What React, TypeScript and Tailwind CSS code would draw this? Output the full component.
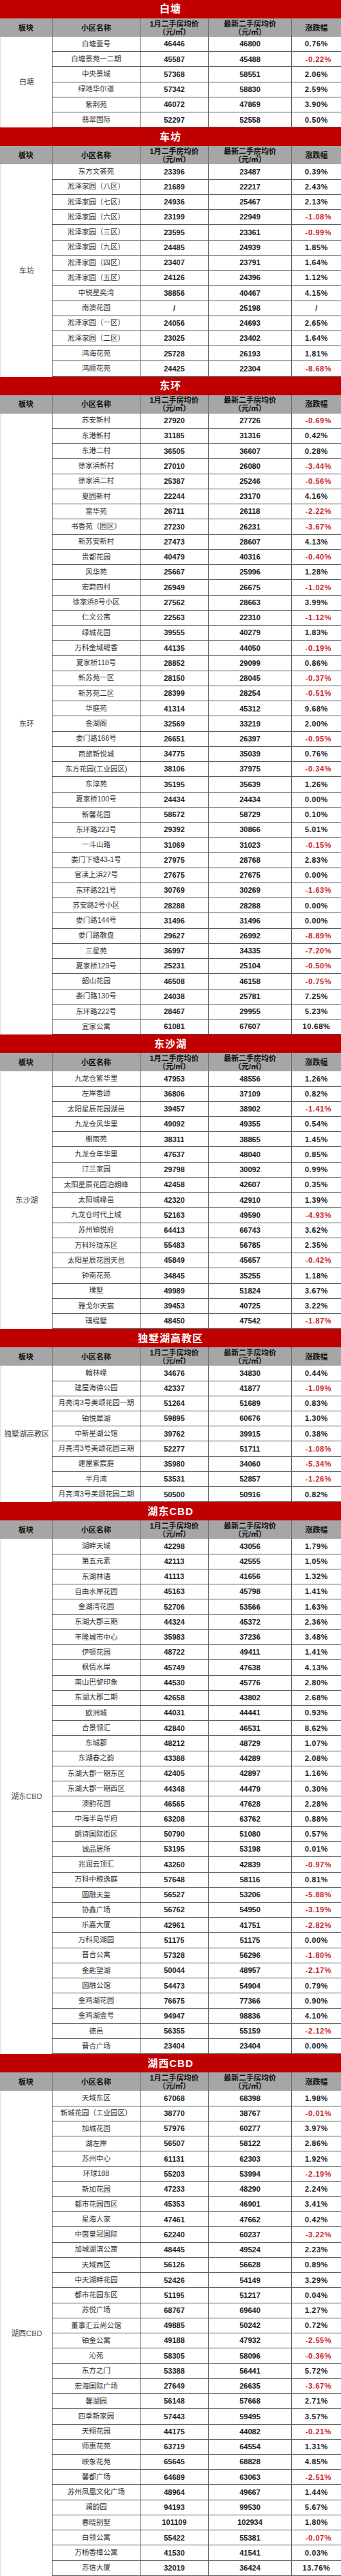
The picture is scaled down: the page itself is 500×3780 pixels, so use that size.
type Row = [string, string, string, string];

interface Section {
  title: string;
  area: string;
  rows: Row[];
}

const sections: Section[] = [
  {
    title: "白塘",
    area: "白塘",
    rows: [
      ["白塘壹号", "46446", "46800", "0.76%"],
      ["白塘景苑一二期", "45587", "45488", "-0.22%"],
      ["中央景城", "57368", "58551", "2.06%"],
      ["绿地华尔道", "57342", "58830", "2.59%"],
      ["紫荆苑", "46072", "47869", "3.90%"],
      ["翡翠国际", "52297", "52558", "0.50%"],
    ],
  },
  {
    title: "车坊",
    area: "车坊",
    rows: [
      ["东方文荟苑", "23396", "23487", "0.39%"],
      ["淞泽家园（八区）", "21689", "22217", "2.43%"],
      ["淞泽家园（七区）", "24936", "25467", "2.13%"],
      ["淞泽家园（六区）", "23199", "22949", "-1.08%"],
      ["淞泽家园（三区）", "23595", "23361", "-0.99%"],
      ["淞泽家园（九区）", "24485", "24939", "1.85%"],
      ["淞泽家园（四区）", "23407", "23791", "1.64%"],
      ["淞泽家园（五区）", "24126", "24396", "1.12%"],
      ["中锐星奕湾", "38856", "40467", "4.15%"],
      ["南澳花园", "/", "25198", "/"],
      ["淞泽家园（一区）", "24056", "24693", "2.65%"],
      ["淞泽家园（二区）", "23025", "23402", "1.64%"],
      ["鸿海花苑", "25728", "26193", "1.81%"],
      ["鸿顺花苑", "24425", "22304", "-8.68%"],
    ],
  },
  {
    title: "东环",
    area: "东环",
    rows: [
      ["苏安新村", "27920", "27726", "-0.69%"],
      ["东港新村", "31185", "31316", "0.42%"],
      ["东港二村", "36505", "36607", "0.28%"],
      ["徐家浜新村", "27010", "26080", "-3.44%"],
      ["徐家浜二村", "25387", "25246", "-0.56%"],
      ["夏园新村", "22244", "23170", "4.16%"],
      ["富华苑", "26711", "26118", "-2.22%"],
      ["书香苑（园区）", "27230", "26231", "-3.67%"],
      ["新苏安新村", "27473", "28607", "4.13%"],
      ["贵都花园", "40479", "40316", "-0.40%"],
      ["风华苑", "25667", "25996", "1.28%"],
      ["宏葑四村", "26949", "26675", "-1.02%"],
      ["徐家浜8号小区", "27562", "28663", "3.99%"],
      ["仁文公寓", "22563", "22310", "-1.12%"],
      ["绿城花园", "39555", "40279", "1.83%"],
      ["万科金域缇香", "44135", "44050", "-0.19%"],
      ["夏家桥118号", "28852", "29099", "0.86%"],
      ["新苏苑一区", "28150", "28045", "-0.37%"],
      ["新苏苑二区", "28399", "28254", "-0.51%"],
      ["华庭苑", "41314", "45312", "9.68%"],
      ["金湖阁", "32569", "33219", "2.00%"],
      ["娄门路166号", "26651", "26397", "-0.95%"],
      ["商旅新悦城", "34775", "35039", "0.76%"],
      ["东方花园(工业园区)", "38106", "37975", "-0.34%"],
      ["东淳苑", "35195", "35639", "1.26%"],
      ["夏家桥100号", "24434", "24434", "0.00%"],
      ["新馨花园", "58672", "58729", "0.10%"],
      ["东环路223号", "29392", "30866", "5.01%"],
      ["一斗山路", "31069", "31023", "-0.15%"],
      ["娄门下塘43-1号", "27975", "28768", "2.83%"],
      ["官渎上浜27号", "27675", "27675", "0.00%"],
      ["东环路221号", "30769", "30269", "-1.63%"],
      ["苏安路2号小区", "28288", "28288", "0.00%"],
      ["娄门路144号", "31496", "31496", "0.00%"],
      ["娄门路散盘", "29627", "26992", "-8.89%"],
      ["三星苑", "36997", "34335", "-7.20%"],
      ["夏家桥129号", "25231", "25104", "-0.50%"],
      ["韶山花园", "46508", "46158", "-0.75%"],
      ["娄门路130号", "24038", "25781", "7.25%"],
      ["东环路222号", "28467", "29955", "5.23%"],
      ["宜家公寓", "61081", "67607", "10.68%"],
    ],
  },
  {
    title: "东沙湖",
    area: "东沙湖",
    rows: [
      ["九龙仓繁华里", "47953", "48556", "1.26%"],
      ["左岸香颂", "36806", "37109", "0.82%"],
      ["太阳星辰花园湖邑", "39457", "38902", "-1.41%"],
      ["九龙仓风华里", "49092", "49355", "0.54%"],
      ["榭雨苑", "38311", "38865", "1.45%"],
      ["九龙仓年华里", "47637", "48040", "0.85%"],
      ["汀兰家园", "29798", "30092", "0.99%"],
      ["太阳星辰花园泊朗峰", "42458", "42607", "0.35%"],
      ["太阳城缘邑", "42320", "42910", "1.39%"],
      ["九龙仓时代上城", "52163", "49590", "-4.93%"],
      ["苏州铂悦府", "64413", "66743", "3.62%"],
      ["万科玲珑东区", "55483", "56785", "2.35%"],
      ["太阳星辰花园天邑", "45849", "45657", "-0.42%"],
      ["钟南花苑", "34845", "35255", "1.18%"],
      ["璞墅", "49989", "51824", "3.67%"],
      ["雅戈尔天宸", "39453", "40725", "3.22%"],
      ["璞缇墅", "48450", "47542", "-1.87%"],
    ],
  },
  {
    title: "独墅湖高教区",
    area: "独墅湖高教区",
    rows: [
      ["翰林缘", "34676", "34830", "0.44%"],
      ["建屋海德公园", "42337", "41877", "-1.09%"],
      ["月亮湾3号美颂花园一期", "51264", "51689", "0.83%"],
      ["铂悦犀湖", "59895", "60676", "1.30%"],
      ["中新星湖公馆", "39762", "39915", "0.38%"],
      ["月亮湾3号美颂花园三期", "52277", "51711", "-1.08%"],
      ["建屋紫宸庭", "35980", "34060", "-5.34%"],
      ["半月湾", "53531", "52857", "-1.26%"],
      ["月亮湾3号美颂花园二期", "50500", "50916", "0.82%"],
    ],
  },
  {
    title: "湖东CBD",
    area: "湖东CBD",
    rows: [
      ["湖畔天城", "42298", "43056", "1.79%"],
      ["第五元素", "42113", "42555", "1.05%"],
      ["东湖林语", "41113", "41656", "1.32%"],
      ["自由水岸花园", "45163", "45798", "1.41%"],
      ["金湖湾花园", "52706", "53566", "1.63%"],
      ["东湖大郡三期", "44324", "45372", "2.36%"],
      ["丰隆城市中心", "35983", "37236", "3.48%"],
      ["伊顿花园", "48722", "49411", "1.41%"],
      ["枫情水岸", "45749", "47638", "4.13%"],
      ["南山巴黎印象", "44530", "45776", "2.80%"],
      ["东湖大郡二期", "42658", "43802", "2.68%"],
      ["欧洲城", "44031", "44441", "0.93%"],
      ["合景领汇", "42840", "46531", "8.62%"],
      ["东城郡", "48212", "48729", "1.07%"],
      ["东湖春之韵", "43388", "44289", "2.08%"],
      ["东湖大郡一期东区", "42405", "42897", "1.16%"],
      ["东湖大郡一期西区", "44348", "44479", "0.30%"],
      ["澳韵花园", "46565", "47628", "2.28%"],
      ["中海半岛华府", "63208", "63762", "0.88%"],
      ["朗诗国际街区", "50790", "51080", "0.57%"],
      ["诚品居所", "53195", "53198", "0.01%"],
      ["兆润云顶汇", "43260", "42839", "-0.97%"],
      ["万科中粮逸庭", "57648", "58116", "0.81%"],
      ["圆融天玺", "56527", "53206", "-5.88%"],
      ["协鑫广场", "56762", "54950", "-3.19%"],
      ["乐嘉大厦", "42961", "41751", "-2.82%"],
      ["万科见湖园", "51175", "51175", "0.00%"],
      ["晋合公寓", "57328", "56296", "-1.80%"],
      ["金匙望湖", "50044", "48957", "-2.17%"],
      ["圆融公馆", "54473", "54904", "0.79%"],
      ["金鸡湖花园", "76675", "77366", "0.90%"],
      ["金鸡湖壹号", "94947", "98836", "4.10%"],
      ["德邑", "56355", "55159", "-2.12%"],
      ["晋合广场", "23404", "23404", "0.00%"],
    ],
  },
  {
    title: "湖西CBD",
    area: "湖西CBD",
    rows: [
      ["天域东区", "67068", "68398", "1.98%"],
      ["新城花园（工业园区）", "38770", "38767", "-0.01%"],
      ["加城花园", "57976", "60277", "3.97%"],
      ["湖左岸", "56507", "58122", "2.86%"],
      ["苏州中心", "61131", "62303", "1.92%"],
      ["环球188", "55203", "53994", "-2.19%"],
      ["新加花园", "47233", "48290", "2.24%"],
      ["都市花园西区", "45353", "46901", "3.41%"],
      ["星海人家", "47461", "47662", "0.42%"],
      ["中茵皇冠国际", "62240", "60237", "-3.22%"],
      ["加城湖滨公寓", "48445", "49524", "2.23%"],
      ["天域西区", "56126", "56628", "0.89%"],
      ["中天湖畔花园", "52426", "54149", "3.29%"],
      ["都市花园东区", "51195", "51217", "0.04%"],
      ["苏悦广场", "68767", "69640", "1.27%"],
      ["董事汇云尚公馆", "49885", "50242", "0.72%"],
      ["铂金公寓", "49188", "47932", "-2.55%"],
      ["沁苑", "58305", "58096", "-0.36%"],
      ["东方之门", "53388", "56441", "5.72%"],
      ["宏海国际广场", "27649", "26635", "-3.67%"],
      ["馨湖园", "56148", "57668", "2.71%"],
      ["四季新家园", "57443", "59495", "3.57%"],
      ["天翔花园", "44175", "44082", "-0.21%"],
      ["师惠花苑", "63719", "64554", "1.31%"],
      ["映象花苑", "65645", "68828", "4.85%"],
      ["馨都广场", "64689", "63063", "-2.51%"],
      ["苏州凤凰文化广场", "48964", "49667", "1.44%"],
      ["澜韵园", "94193", "99530", "5.67%"],
      ["春晓别墅", "101109", "102934", "1.80%"],
      ["白领公寓", "55422", "55381", "-0.07%"],
      ["万杨香樟公寓", "41530", "41541", "0.03%"],
      ["苏信大厦", "32019", "36424", "13.76%"],
    ],
  },
];

function HeaderRow() {
  return (
    <div className="grid h-[27px] grid-cols-[76px_129px_100px_122px_73px] bg-[#a6a6a6] text-[11px] font-bold leading-[12px] text-[#111]">
      <div className="flex items-center justify-center">板块</div>
      <div className="flex items-center justify-center border-l border-[#6b6b6b]">小区名称</div>
      <div className="flex flex-col items-center justify-center border-l border-[#6b6b6b]">
        <span>1月二手房均价</span>
        <span>（元/㎡）</span>
      </div>
      <div className="flex flex-col items-center justify-center border-l border-[#6b6b6b]">
        <span>最新二手房均价</span>
        <span>（元/㎡）</span>
      </div>
      <div className="flex items-center justify-center border-l border-[#6b6b6b]">涨跌幅</div>
    </div>
  );
}

function DataRow({ row }: { row: Row }) {
  const [name, jan, latest, pct] = row;
  const down = pct.startsWith("-");
  return (
    <div className="grid h-[22.24px] grid-cols-[129px_100px_122px_73px] border-b border-[#5a5a5a] text-[11px]">
      <div className="flex items-center justify-center border-l border-[#5a5a5a] whitespace-nowrap text-[10.5px] text-[#333]">
        {name}
      </div>
      <div className="flex items-center justify-center border-l border-[#5a5a5a] font-bold text-[#222]">
        {jan}
      </div>
      <div className="flex items-center justify-center border-l border-[#5a5a5a] font-bold text-[#222]">
        {latest}
      </div>
      <div
        className={`flex items-center justify-center border-l border-[#5a5a5a] font-bold tracking-[0.6px] ${
          down ? "pl-[6px] text-[#c8232c]" : "text-[#222]"
        }`}
      >
        {pct}
      </div>
    </div>
  );
}

function SectionTable({ section }: { section: Section }) {
  return (
    <section>
      <div className="flex h-[27px] items-center justify-center bg-[#c00000] text-[15px] font-bold tracking-[1px] text-white">
        {section.title}
      </div>
      <HeaderRow />
      <div className="flex">
        <div className="flex w-[76px] shrink-0 items-center justify-center border-l-2 border-[#e6e6e6] bg-white text-[11px] text-[#444]">
          {section.area}
        </div>
        <div className="flex-1">
          {section.rows.map((row, index) => (
            <DataRow key={`${section.title}-${index}`} row={row} />
          ))}
        </div>
      </div>
    </section>
  );
}

export default function App() {
  return (
    <div className="w-[500px] bg-white font-['Liberation_Sans','Noto_Sans_CJK_SC',sans-serif]">
      {sections.map((section) => (
        <SectionTable key={section.title} section={section} />
      ))}
    </div>
  );
}
